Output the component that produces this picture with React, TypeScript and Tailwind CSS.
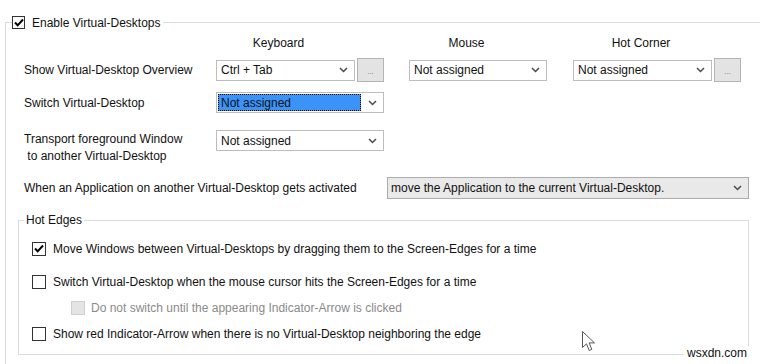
import clsx from 'clsx';

const Chevron = () => (
  <svg width="9" height="6" viewBox="0 0 9 6">
    <path d="M1 1l3.5 3.5L8 1" fill="none" stroke="#4a4a4a" strokeWidth="1.5" />
  </svg>
);

const Combo = ({
  value,
  className,
  selected,
  gray,
}: {
  value: string;
  className: string;
  selected?: boolean;
  gray?: boolean;
}) => (
  <div
    className={clsx(
      'flex items-center border',
      gray ? 'border-[#acacac] bg-[#e9e9e9]' : 'border-[#bdbdbd] bg-white',
      className
    )}
  >
    {selected ? (
      <div className="ml-[1px] flex h-[17px] flex-1 items-center border border-dotted border-black bg-[#3c93f7] pl-[2px]">
        {value}
      </div>
    ) : (
      <div className={clsx('flex-1', gray ? 'pl-[3px]' : 'pl-[4px]')}>{value}</div>
    )}
    <div className="flex w-[22px] justify-center">
      <Chevron />
    </div>
  </div>
);

const DotsButton = () => (
  <div className="flex h-[24px] w-[27px] items-end justify-center border border-[#b4b4b4] bg-[#e3e3e3] pb-[5px] text-[8px] leading-[8px] text-[#777]">
    ...
  </div>
);

const Check = ({ checked, disabled }: { checked?: boolean; disabled?: boolean }) => (
  <div
    className={clsx(
      'flex h-[14px] w-[14px] shrink-0 items-center justify-center border',
      disabled ? 'border-[#cfcfcf] bg-[#e4e4e4]' : 'border-[#333] bg-white'
    )}
  >
    {checked && (
      <svg width="10" height="9" viewBox="0 0 10 9">
        <path d="M1 4.5l2.7 2.8L9 1.5" fill="none" stroke="#000" strokeWidth="2" />
      </svg>
    )}
  </div>
);

const Cursor = () => (
  <svg width="14" height="21" viewBox="0 0 14 21" className="absolute left-[582px] top-[331px]">
    <path
      d="M0.5 0.5L0.5 16.5L4.5 12.8L7.2 19.5L9.8 18.4L7.2 11.9L12.5 11.9Z"
      fill="#fff"
      stroke="#555"
      strokeWidth="1"
      strokeLinejoin="round"
    />
  </svg>
);

export default function App() {
  return (
    <div className="relative h-[364px] w-[760px] overflow-hidden bg-white font-['Liberation_Sans',Arial,sans-serif] text-[12px] leading-[14px] text-[#111]">
      <fieldset className="ml-[5px] mt-[15px] border-l border-t border-[#dcdcdc] pb-[30px]">
        <legend className="ml-[6px] flex h-[15px] items-center gap-[7px] pr-[2px]">
          <div className="flex h-[13px] w-[13px] items-center justify-center border border-[#333] bg-white">
            <svg width="10" height="9" viewBox="0 0 10 9">
              <path d="M1 4.5l2.7 2.8L9 1.5" fill="none" stroke="#000" strokeWidth="2" />
            </svg>
          </div>
          <span>Enable Virtual-Desktops</span>
        </legend>

        <div className="pl-[18px]">
          {/* column headers */}
          <div className="mt-[6px] flex h-[14px]">
            <div className="w-[192px]" />
            <div className="w-[125px] text-center">Keyboard</div>
            <div className="w-[251px] text-center">Mouse</div>
            <div className="w-[98px] text-center">Hot Corner</div>
          </div>

          <div className="mt-[8px] flex h-[24px] items-center">
            <div className="w-[192px]">Show Virtual-Desktop Overview</div>
            <Combo value="Ctrl + Tab" className="h-[21px] w-[139px]" />
            <div className="ml-[2px]">
              <DotsButton />
            </div>
            <Combo value="Not assigned" className="ml-[25px] h-[21px] w-[138px]" />
            <Combo value="Not assigned" className="ml-[26px] h-[21px] w-[139px]" />
            <div className="ml-[2px]">
              <DotsButton />
            </div>
          </div>

          <div className="mt-[10px] flex h-[21px] items-center">
            <div className="w-[192px]">Switch Virtual-Desktop</div>
            <Combo value="Not assigned" selected className="h-[21px] w-[168px]" />
          </div>

          <div className="mt-[17px] flex items-start">
            <div className="w-[192px] whitespace-pre pt-[1px] leading-[17px]">
              {'Transport foreground Window\n to another Virtual-Desktop'}
            </div>
            <Combo value="Not assigned" className="h-[21px] w-[168px]" />
          </div>

          <div className="mt-[12px] flex h-[22px] items-center">
            <div className="w-[363px]">When an Application on another Virtual-Desktop gets activated</div>
            <Combo
              value="move the Application to the current Virtual-Desktop."
              gray
              className="h-[22px] w-[362px]"
            />
          </div>

          <fieldset className="-ml-[6px] mt-[14px] w-[731px] border border-[#dcdcdc] pb-[13px]">
            <legend className="ml-[5px] h-[14px] px-[2px]">Hot Edges</legend>
            <div className="pl-[13px]">
              <div className="mt-[14px] flex h-[15px] items-center gap-[7px]">
                <Check checked />
                <span>Move Windows between Virtual-Desktops by dragging them to the Screen-Edges for a time</span>
              </div>
              <div className="mt-[18px] flex h-[15px] items-center gap-[7px]">
                <Check />
                <span>Switch Virtual-Desktop when the mouse cursor hits the Screen-Edges for a time</span>
              </div>
              <div className="ml-[39px] mt-[11px] flex h-[15px] items-center gap-[6px] text-[#8a8a8a]">
                <Check disabled />
                <span>Do not switch until the appearing Indicator-Arrow is clicked</span>
              </div>
              <div className="mt-[11px] flex h-[15px] items-center gap-[7px]">
                <Check />
                <span>Show red Indicator-Arrow when there is no Virtual-Desktop neighboring the edge</span>
              </div>
            </div>
          </fieldset>
        </div>
      </fieldset>

      <Cursor />
      <div className="absolute left-[684px] top-[346px] bg-white pl-[3px] pr-[2px] text-[12px] leading-[15px] text-[#111]">
        wsxdn.com
      </div>
    </div>
  );
}
